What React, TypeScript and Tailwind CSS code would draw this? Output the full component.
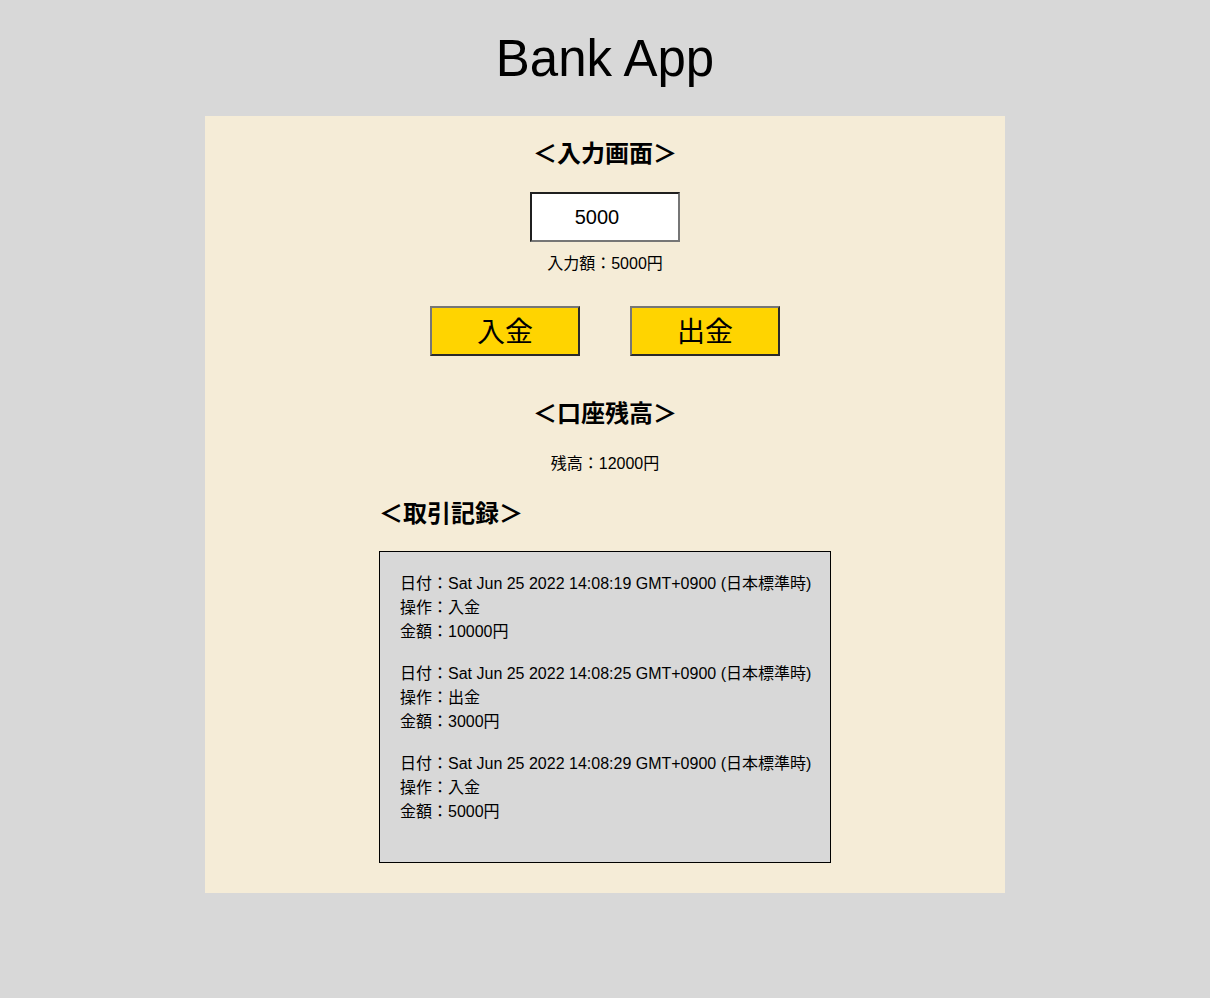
import React from "react";

const records = [
  { date: "Sat Jun 25 2022 14:08:19 GMT+0900 (日本標準時)", op: "入金", amount: "10000" },
  { date: "Sat Jun 25 2022 14:08:25 GMT+0900 (日本標準時)", op: "出金", amount: "3000" },
  { date: "Sat Jun 25 2022 14:08:29 GMT+0900 (日本標準時)", op: "入金", amount: "5000" },
];

export default function App() {
  return (
    <div
      className="min-h-[998px] w-full bg-[#d8d8d8] text-black flex flex-col items-center pt-[31px]"
      style={{ fontFamily: '"Liberation Sans", Arial, "Noto Sans CJK JP", sans-serif' }}
    >
      <h1 className="text-[51px] leading-[56px] font-normal">Bank App</h1>
      <div className="mt-[29px] w-[800px] bg-[#f5ecd7] flex flex-col items-center pt-[22px] pb-[30px]">
        <h2 className="text-[24px] leading-[32px] font-bold">＜入力画面＞</h2>
        <input
          type="text"
          defaultValue="5000"
          className="mt-[22px] w-[150px] h-[50px] bg-white text-[20px] text-center pr-[16px] border-2 border-t-[#1f1f1f] border-l-[#1f1f1f] border-r-[#767676] border-b-[#767676] outline-none"
        />
        <p className="mt-[10px] text-[16px] leading-[24px]">入力額：5000円</p>
        <div className="mt-[30px] flex gap-[50px]">
          <button className="w-[150px] h-[50px] bg-[#ffd400] text-[28px] leading-none pt-[3px] border-2 border-t-[#767676] border-l-[#767676] border-r-[#2a2a2a] border-b-[#2a2a2a]">
            入金
          </button>
          <button className="w-[150px] h-[50px] bg-[#ffd400] text-[28px] leading-none pt-[3px] border-2 border-t-[#767676] border-l-[#767676] border-r-[#2a2a2a] border-b-[#2a2a2a]">
            出金
          </button>
        </div>
        <h2 className="mt-[42px] text-[24px] leading-[32px] font-bold">＜口座残高＞</h2>
        <p className="mt-[22px] text-[16px] leading-[24px]">残高：12000円</p>
        <div className="mt-[22px] w-[452px] flex flex-col">
          <h2 className="text-[24px] leading-[32px] font-bold">＜取引記録＞</h2>
          <div className="mt-[21px] border border-black bg-[#d8d8d8] p-5">
            {records.map((r, i) => (
              <div key={i} className="mb-[18px] text-[16px] leading-[24px] whitespace-nowrap">
                <p>日付：{r.date}</p>
                <p>操作：{r.op}</p>
                <p>金額：{r.amount}円</p>
              </div>
            ))}
          </div>
        </div>
      </div>
    </div>
  );
}
